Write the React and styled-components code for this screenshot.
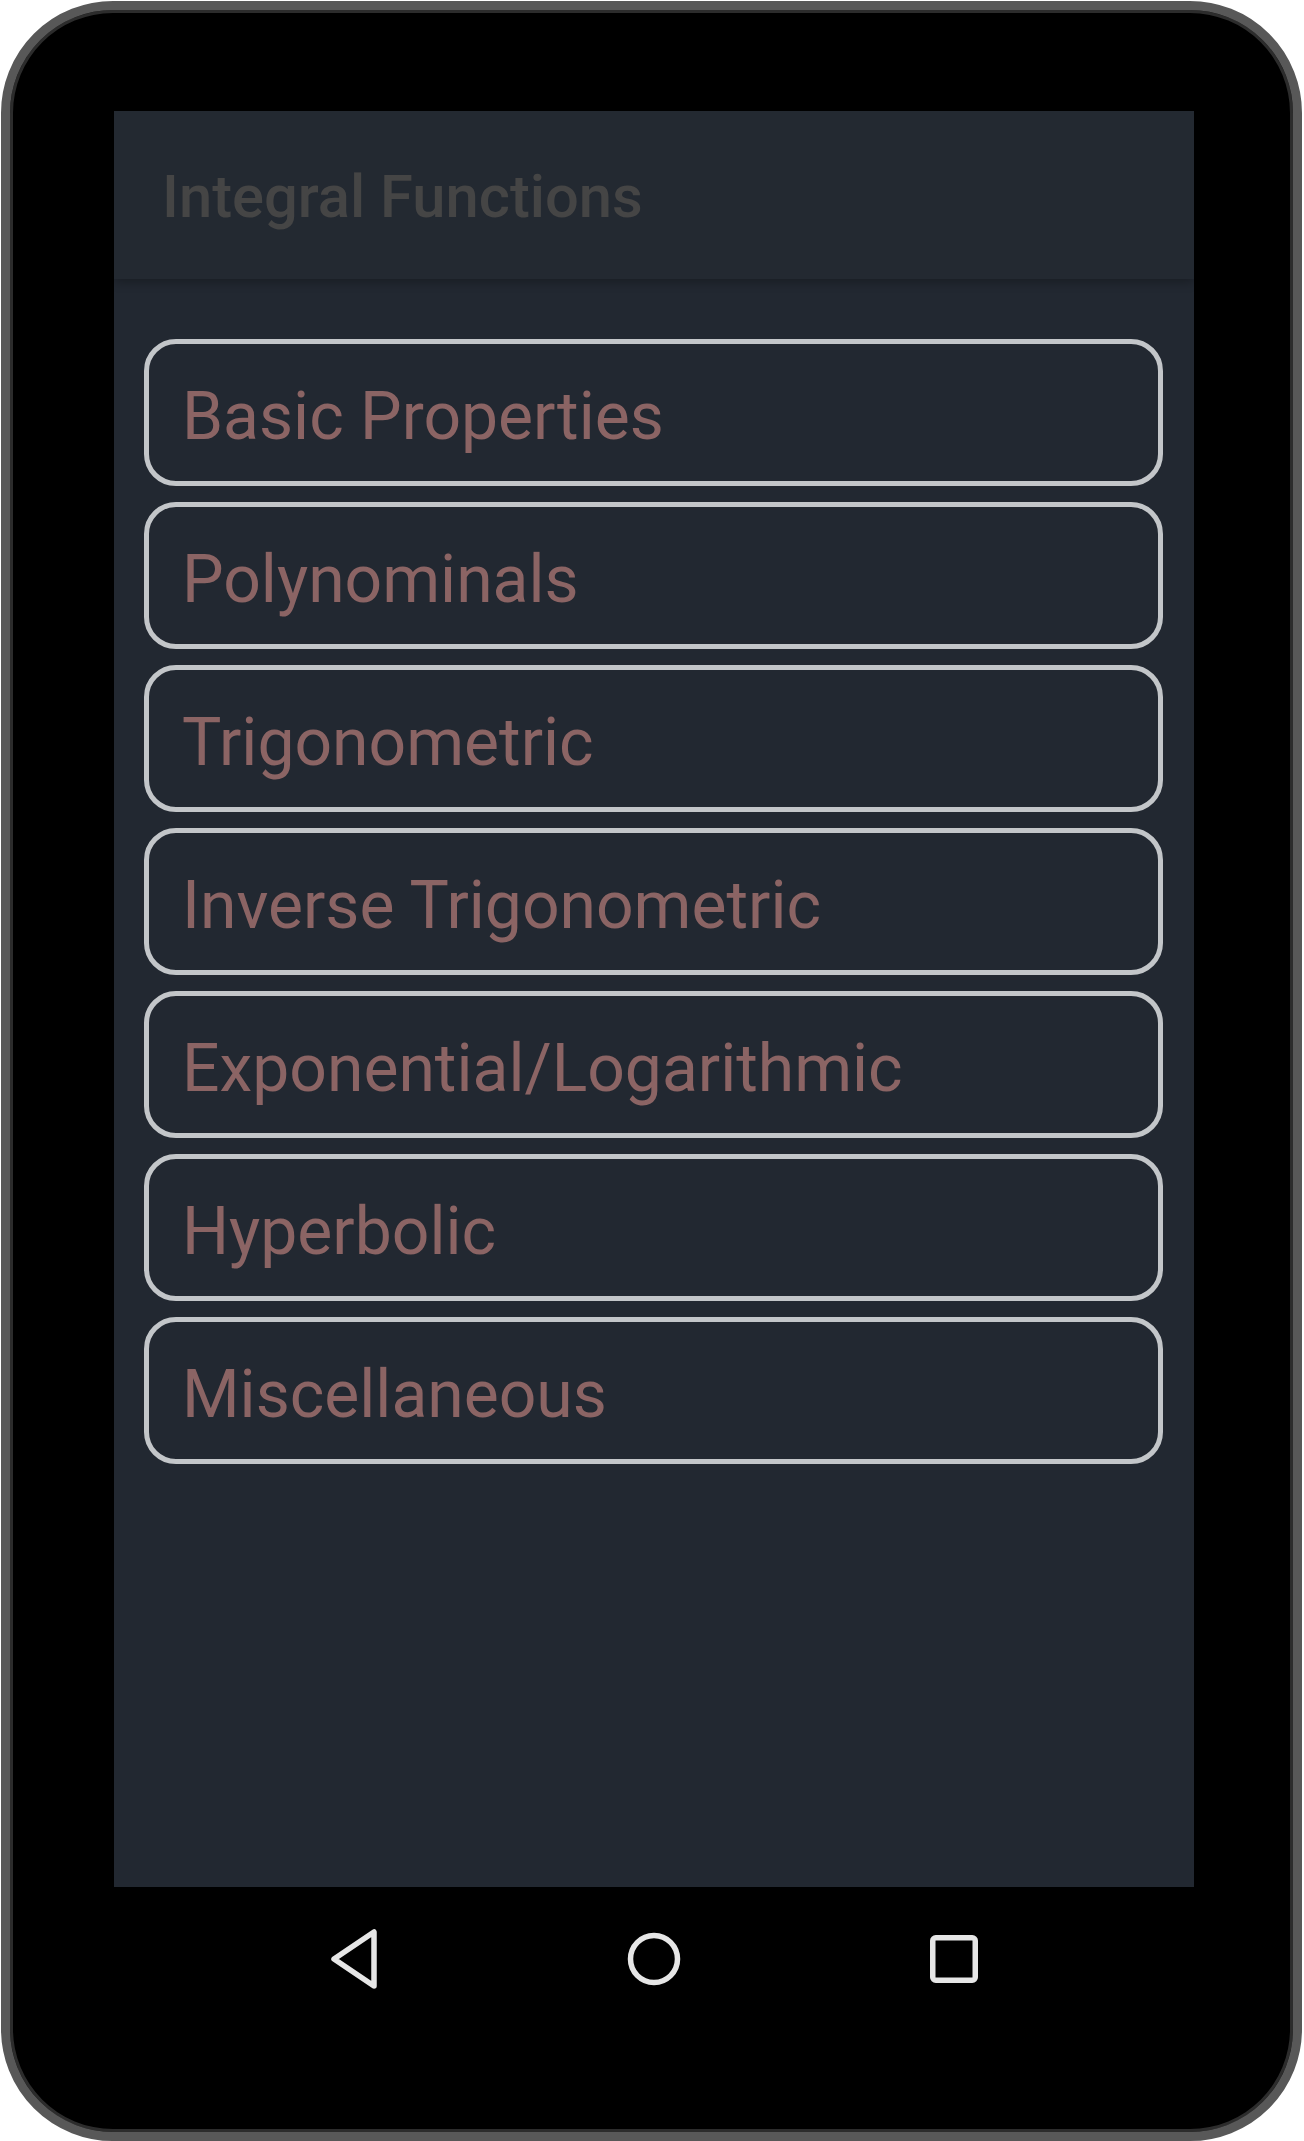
import React from 'react'
import styled, { createGlobalStyle } from 'styled-components'

const topics = [
  'Basic Properties',
  'Polynominals',
  'Trigonometric',
  'Inverse Trigonometric',
  'Exponential/Logarithmic',
  'Hyperbolic',
  'Miscellaneous',
]

const GlobalStyle = createGlobalStyle`
  html, body {
    margin: 0;
    padding: 0;
    background: #ffffff;
  }
  * {
    box-sizing: border-box;
  }
`

function BackIcon() {
  return (
    <svg width="60" height="64" viewBox="0 0 60 64">
      <path d="M50 5 L50 59 L10 32 Z" fill="none" stroke="#e6e6e6" strokeWidth="5.5" strokeLinejoin="round" />
    </svg>
  )
}

function HomeIcon() {
  return (
    <svg width="60" height="60" viewBox="0 0 60 60">
      <circle cx="30" cy="30" r="23.5" fill="none" stroke="#e6e6e6" strokeWidth="5.5" />
    </svg>
  )
}

function RecentsIcon() {
  return (
    <svg width="60" height="60" viewBox="0 0 60 60">
      <rect x="8.75" y="8.75" width="42.5" height="42.5" rx="3" fill="none" stroke="#e6e6e6" strokeWidth="5.5" />
    </svg>
  )
}

class App extends React.Component {
  renderTopics() {
    return topics.map((topic) => {
      return (
        <TopicButton key={topic}>{topic}</TopicButton>
      )
    })
  }

  render() {
    return (
      <Device>
        <GlobalStyle />
        <Screen>
          <Header>
            <Title>Integral Functions</Title>
          </Header>
          <List>
            {this.renderTopics()}
          </List>
        </Screen>
        <NavBar>
          <NavSlot><BackIcon /></NavSlot>
          <NavSlot><HomeIcon /></NavSlot>
          <NavSlot><RecentsIcon /></NavSlot>
        </NavBar>
      </Device>
    )
  }
}

const Device = styled.div`
  width: 1301px;
  height: 2140px;
  margin: 1px 0 0 1px;
  border: 9px solid #585858;
  border-radius: 112px;
  background: #000;
  box-shadow: inset 0 0 0 3px #2c2c2c;
  padding: 101px 98px 0 104px;
  display: flex;
  flex-direction: column;
`

const Screen = styled.div`
  width: 1080px;
  height: 1776px;
  background: #222831;
  display: flex;
  flex-direction: column;
`

const Header = styled.div`
  height: 168px;
  flex-shrink: 0;
  background: #232931;
  display: flex;
  align-items: center;
  padding: 4px 0 0 48px;
  box-shadow: 0 3px 10px rgba(0, 0, 0, 0.28);
  position: relative;
  z-index: 1;
`

const Title = styled.h1`
  margin: 0;
  font-family: Roboto, "Noto Sans", sans-serif;
  font-weight: 500;
  font-size: 59.7px;
  color: #454545;
  letter-spacing: 0;
`

const List = styled.div`
  display: flex;
  flex-direction: column;
  gap: 16px;
  padding: 60px 31px 0 30px;
`

const TopicButton = styled.div`
  height: 147px;
  border: 5px solid #c3c6c9;
  border-radius: 32px;
  display: flex;
  align-items: center;
  padding: 7px 0 0 33px;
  font-family: Roboto, "Noto Sans", sans-serif;
  font-size: 66px;
  color: #8b6464;
  cursor: pointer;
`

const NavBar = styled.div`
  width: 1080px;
  height: 144px;
  display: grid;
  grid-template-columns: repeat(3, 300px);
  justify-content: center;
  align-items: center;
`

const NavSlot = styled.div`
  display: flex;
  justify-content: center;
  align-items: center;
`

export default App
